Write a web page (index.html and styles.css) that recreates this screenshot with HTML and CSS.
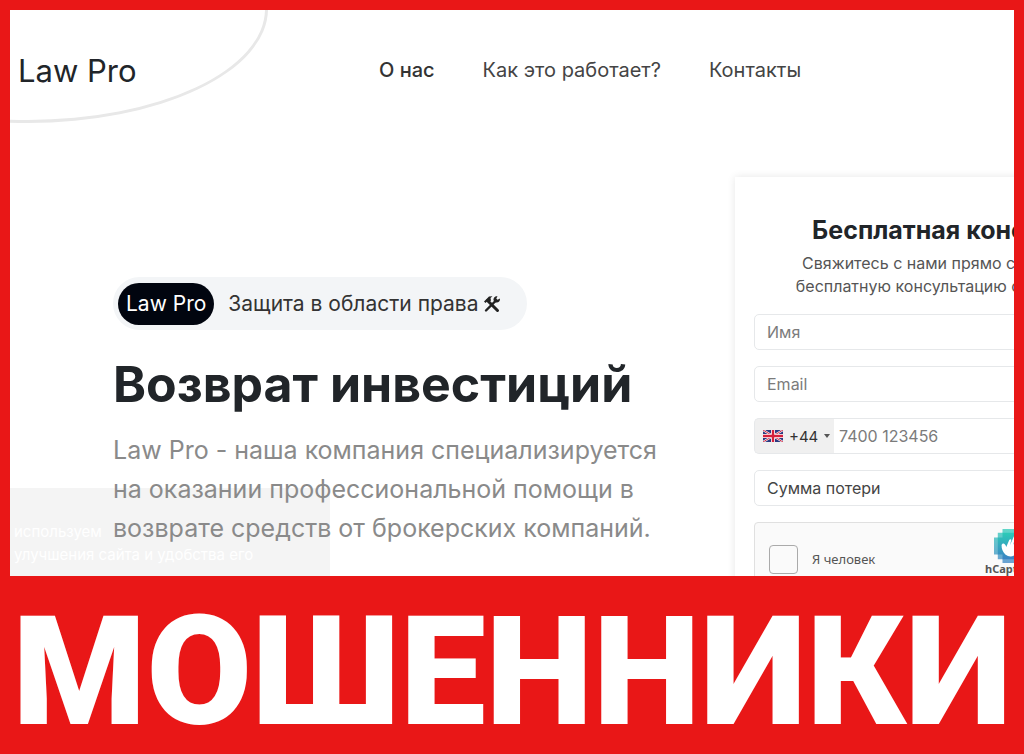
FILE: index.html
```html
<!DOCTYPE html>
<html lang="ru">
<head>
    <meta charset="UTF-8">
    <meta name="viewport" content="width=device-width, initial-scale=1.0">
    <title>Law Pro</title>
    <link rel="stylesheet" href="styles.css">
</head>
<body>
    <main class="site">
        <div class="ellipse"></div>
        <div class="cookie-note">
            <p>используем<br>улучшения сайта и удобства его</p>
        </div>

        <header class="header">
            <a href="#" class="logo">Law Pro</a>
            <nav class="nav">
                <a href="#about" class="active">О нас</a>
                <a href="#how">Как это работает?</a>
                <a href="#contacts">Контакты</a>
            </nav>
        </header>

        <section class="hero">
            <div class="hero-text">
                <div class="badge">
                    <span class="badge-name">Law Pro</span>
                    <span>Защита в области права</span>
                    <svg class="tools" viewBox="0 0 18 18" aria-hidden="true">
                        <path d="M4.5 5.5L14.5 15.5" stroke="#222" stroke-width="3" stroke-linecap="round"/>
                        <path d="M1 6.5L6 1.5L9.5 1.2L7.5 3L8 5.5L5.5 7.2L4.5 6L2.5 8Z" fill="#222"/>
                        <path d="M3 15.5L12.5 6" stroke="#222" stroke-width="2.4" stroke-linecap="round"/>
                        <path d="M14.5 1.2L13.3 3.5L14.5 4.8L17 3.5C17.3 6.5 15 8.2 12.4 7.4L10.6 5.6C10 3 11.8 1 14.5 1.2Z" fill="#222"/>
                    </svg>
                </div>
                <h1>Возврат инвестиций</h1>
                <p class="lead">Law Pro - наша компания специализируется<br>на оказании профессиональной помощи в<br>возврате средств от брокерских компаний.</p>
            </div>

            <form class="card">
                <h2>Бесплатная консультация</h2>
                <p class="card-text">Свяжитесь с нами прямо сейчас и получите<br>бесплатную консультацию от нашей команды</p>
                <input type="text" class="field" placeholder="Имя" aria-label="Имя">
                <input type="email" class="field" placeholder="Email" aria-label="Email">
                <div class="phone">
                    <button type="button" class="code">
                        <svg class="flag" viewBox="0 0 20 12" aria-hidden="true">
                            <rect width="20" height="12" fill="#2b3a80"/>
                            <path d="M0 0L20 12M20 0L0 12" stroke="#fff" stroke-width="2"/>
                            <path d="M0 0L20 12M20 0L0 12" stroke="#d5304a" stroke-width="1"/>
                            <path d="M10 0V12M0 6H20" stroke="#fff" stroke-width="4"/>
                            <path d="M10 0V12M0 6H20" stroke="#d5203c" stroke-width="2.4"/>
                        </svg>
                        <span>+44</span>
                        <span class="arrow"></span>
                    </button>
                    <input type="tel" class="field" placeholder="7400 123456" aria-label="Телефон">
                </div>
                <select class="field" aria-label="Сумма потери">
                    <option>Сумма потери</option>
                </select>
                <div class="captcha">
                    <input type="checkbox" id="human">
                    <label for="human">Я человек</label>
                    <div class="captcha-brand">
                        <svg viewBox="0 0 36 36" aria-hidden="true">
                            <defs>
                                <linearGradient id="teal" x1="0" y1="0" x2="0" y2="1">
                                    <stop offset="0" stop-color="#2dcbb8"/>
                                    <stop offset="1" stop-color="#3b83c4"/>
                                </linearGradient>
                            </defs>
                            <path d="M9 0H27V4H32V9H36V27H32V32H27V36H9V32H4V27H0V9H4V4H9Z" fill="url(#teal)" opacity="0.75"/>
                            <path d="M9 4H27V9H32V27H27V32H9V27H4V9H9Z" fill="url(#teal)"/>
                            <path d="M8 17C9 14 12 15 13 19L16 12C17 10 19 11 18 13L17 17L21 8C22 6 24 7 23 9L20 17L25 9C26 7 28 8 27 10L23 19L28 13C30 12 31 13 30 15L26 23C23 29 17 31 12 27C9 24 8 21 8 17Z" fill="#fff"/>
                        </svg>
                        <span>hCaptcha</span>
                    </div>
                </div>
            </form>
        </section>
    </main>

    <footer class="banner">МОШЕННИКИ</footer>
</body>
</html>
```
FILE: styles.css
```css
* {
    margin: 0;
    padding: 0;
    box-sizing: border-box;
}

body {
    font-family: Inter, "Noto Sans", sans-serif;
    background-color: #e91717;
    color: #212529;
    height: 100vh;
    padding: 10px 10px 0;
    display: flex;
    flex-direction: column;
    overflow: hidden;
}

.site {
    position: relative;
    flex: 1;
    min-height: 0;
    background-color: #fff;
    overflow: hidden;
}

.ellipse {
    position: absolute;
    top: -115px;
    left: -222px;
    width: 480px;
    height: 228px;
    border: 3px solid #e8e8e8;
    border-radius: 50%;
}

.cookie-note {
    position: absolute;
    left: 0;
    bottom: 0;
    width: 320px;
    height: 88px;
    padding: 32px 4px;
    background-color: #f4f4f4;
    color: #fff;
    font-size: 15px;
    line-height: 23px;
}

.header {
    position: relative;
    display: flex;
    align-items: center;
    height: 120px;
    padding-left: 8px;
}

.header a {
    color: #444;
    text-decoration: none;
}

.header .logo {
    width: 361px;
    color: #212529;
    font-size: 31px;
}

.nav {
    display: flex;
    gap: 48px;
    font-size: 20px;
}

.header .active {
    color: #333;
    font-weight: 500;
}

.hero {
    position: relative;
    display: grid;
    grid-template-columns: 622px 484px;
    padding: 47px 0 0 103px;
}

.hero-text {
    padding-top: 100px;
}

.badge {
    display: inline-flex;
    align-items: center;
    height: 53px;
    padding: 0 26px 0 5px;
    border-radius: 27px;
    background-color: #f3f5f7;
    color: #333;
    font-size: 21px;
}

.badge-name {
    margin-right: 14px;
    padding: 0 8px;
    border-radius: 21px;
    background-color: #01050f;
    color: #fff;
    line-height: 42px;
}

.tools {
    width: 18px;
    height: 18px;
    margin-left: 4px;
}

h1 {
    margin-top: 24px;
    font-size: 50px;
    line-height: 60px;
    white-space: nowrap;
}

.lead {
    margin-top: 17px;
    color: #8a8a8a;
    font-size: 25px;
    line-height: 39px;
    white-space: nowrap;
}

.card {
    display: flex;
    flex-direction: column;
    gap: 16px;
    padding: 38px 19px;
    background-color: #fff;
    box-shadow: 0 0 8px rgba(0, 0, 0, 0.1);
}

.card h2 {
    font-size: 25px;
    line-height: 30px;
    text-align: center;
}

.card-text {
    margin-top: -9px;
    color: #555;
    font-size: 16px;
    line-height: 23px;
    text-align: center;
}

.field {
    width: 100%;
    height: 36px;
    padding: 0 12px;
    border: 1px solid #e6e8ea;
    border-radius: 5px;
    background-color: #fff;
    color: #444;
    font-family: inherit;
    font-size: 16px;
    appearance: none;
}

.field::placeholder {
    color: #7b7b7b;
}

.phone {
    display: flex;
}

.phone .field {
    padding-left: 5px;
    border-left: 0;
    border-radius: 0 5px 5px 0;
}

.code {
    display: flex;
    align-items: center;
    flex: none;
    gap: 6px;
    width: 80px;
    padding-left: 8px;
    border: 1px solid #e6e8ea;
    border-right: 0;
    border-radius: 5px 0 0 5px;
    background-color: #f0f0f0;
    color: #333;
    font-family: inherit;
    font-size: 15px;
}

.flag {
    width: 20px;
    height: 12px;
}

.arrow {
    border: 3px solid transparent;
    border-top: 4px solid #555;
    border-bottom: 0;
}

.captcha {
    display: flex;
    align-items: center;
    width: 300px;
    height: 74px;
    padding: 0 14px;
    border: 1px solid #e0e0e0;
    border-radius: 4px;
    background-color: #fafafa;
    color: #555;
    font-family: "Noto Sans", sans-serif;
    font-size: 13px;
}

.captcha input {
    width: 29px;
    height: 29px;
    margin-right: 14px;
    border: 1px solid #aaa;
    border-radius: 4px;
    background-color: #fafafa;
    appearance: none;
}

.captcha-brand {
    display: flex;
    flex-direction: column;
    align-items: center;
    align-self: flex-start;
    margin-left: auto;
    padding: 6px 2px 0 0;
    font-size: 11px;
    font-weight: 700;
    line-height: 12px;
}

.captcha-brand svg {
    width: 34px;
    height: 34px;
}

.banner {
    height: 178px;
    color: #fff;
    font-family: Roboto, sans-serif;
    font-size: 153px;
    font-weight: 900;
    line-height: 192px;
    text-align: center;
    white-space: nowrap;
}
```
